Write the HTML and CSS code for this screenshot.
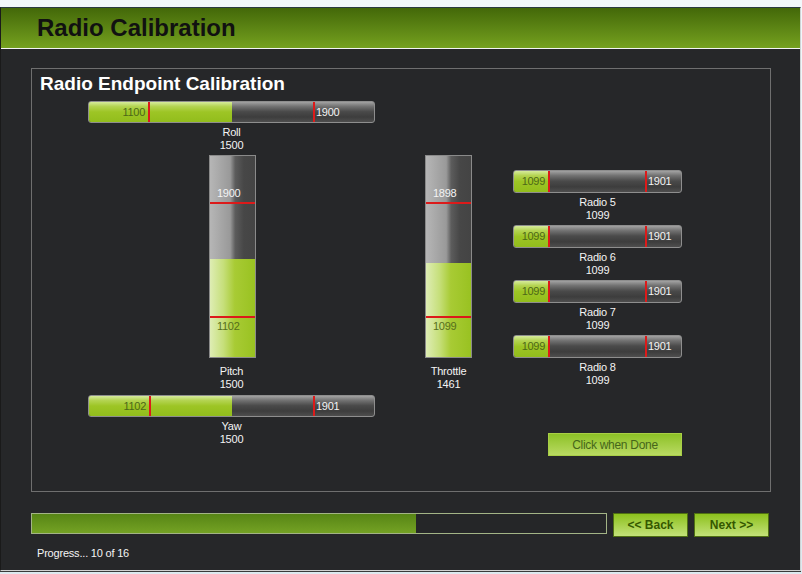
FILE: index.html
```html
<!DOCTYPE html>
<html>
<head>
<meta charset="utf-8">
<title>Radio Calibration</title>
<link rel="stylesheet" href="styles.css">
</head>
<body>
<div class="window">
  <header class="hdr"><h1>Radio Calibration</h1></header>
  <main class="main">
    <section class="frame">
      <h2>Radio Endpoint Calibration</h2>
      <div class="gauges">
        <div class="col-left">
          <div class="hbar wide">
            <div class="fill" style="width:143px"></div>
            <div class="mark min" style="left:59px"><span>1100</span></div>
            <div class="mark max" style="left:224px"><span>1900</span></div>
          </div>
          <div class="cap">Roll<br>1500</div>
          <div class="vbar pitch">
            <div class="vfill" style="height:98px"></div>
            <div class="vmark hi" style="top:46px"><span>1900</span></div>
            <div class="vmark lo" style="top:160px"><span>1102</span></div>
          </div>
          <div class="cap vcap">Pitch<br>1500</div>
          <div class="hbar wide yaw">
            <div class="fill" style="width:143px"></div>
            <div class="mark min" style="left:60px"><span>1102</span></div>
            <div class="mark max" style="left:224px"><span>1901</span></div>
          </div>
          <div class="cap">Yaw<br>1500</div>
        </div>

        <div class="col-mid">
          <div class="vbar">
            <div class="vfill" style="height:94px"></div>
            <div class="vmark hi" style="top:46px"><span>1898</span></div>
            <div class="vmark lo" style="top:160px"><span>1099</span></div>
          </div>
          <div class="cap vcap">Throttle<br>1461</div>
        </div>

        <div class="col-right">
          <div class="radio">
            <div class="hbar small">
              <div class="fill" style="width:35px"></div>
              <div class="mark min" style="left:34px"><span>1099</span></div>
              <div class="mark max" style="left:131px"><span>1901</span></div>
            </div>
            <div class="cap">Radio 5<br>1099</div>
          </div>
          <div class="radio">
            <div class="hbar small">
              <div class="fill" style="width:35px"></div>
              <div class="mark min" style="left:34px"><span>1099</span></div>
              <div class="mark max" style="left:131px"><span>1901</span></div>
            </div>
            <div class="cap">Radio 6<br>1099</div>
          </div>
          <div class="radio">
            <div class="hbar small">
              <div class="fill" style="width:35px"></div>
              <div class="mark min" style="left:34px"><span>1099</span></div>
              <div class="mark max" style="left:131px"><span>1901</span></div>
            </div>
            <div class="cap">Radio 7<br>1099</div>
          </div>
          <div class="radio">
            <div class="hbar small">
              <div class="fill" style="width:35px"></div>
              <div class="mark min" style="left:34px"><span>1099</span></div>
              <div class="mark max" style="left:131px"><span>1901</span></div>
            </div>
            <div class="cap">Radio 8<br>1099</div>
          </div>
          <button class="done">Click when Done</button>
        </div>
      </div>
    </section>

    <div class="progress-row">
      <div class="progress"><div class="pfill" style="width:384px"></div></div>
      <button class="nav">&lt;&lt; Back</button>
      <button class="nav">Next &gt;&gt;</button>
    </div>
    <div class="status">Progress... 10 of 16</div>
  </main>
</div>
</body>
</html>
```

FILE: styles.css
```css
* { box-sizing: border-box; }
html, body {
  margin: 0;
  padding: 0;
}
body {
  width: 802px;
  height: 574px;
  overflow: hidden;
  background: linear-gradient(#f2f8fb, #dde9ef);
  font-family: "Liberation Sans", Arial, sans-serif;
  padding-top: 7px;
}
.window {
  width: 801px;
  height: 564px;
  border-top: 1px solid #2b3b42;
  border-left: 1px solid #1a1a1a;
  border-right: 1px solid #cfd4d6;
  border-bottom: 1px solid #d0d0d0;
  box-shadow: 0 1px 0 #3a3a3a;
  background: #262729;
  display: flex;
  flex-direction: column;
}
.hdr {
  height: 41px;
  border-bottom: 1px solid #f4f4f4;
  background: linear-gradient(#436809, #75a11f);
  padding-left: 36px;
}
.hdr h1 {
  margin: 0;
  font-size: 24px;
  line-height: 40px;
  font-weight: bold;
  color: #111;
}
.main {
  flex: 1;
  padding: 19px 0 0 30px;
  background: #262729;
}
.frame {
  width: 740px;
  height: 424px;
  border: 1px solid #6f6f6f;
  padding-top: 4px;
}
.frame h2 {
  margin: 0;
  padding-left: 8px;
  font-size: 19px;
  line-height: 22px;
  font-weight: bold;
  color: #fff;
}
.gauges {
  display: flex;
  align-items: flex-start;
  padding-left: 56px;
  margin-top: 6px;
}
.col-left {
  width: 287px;
  display: flex;
  flex-direction: column;
  align-items: center;
}
.col-mid {
  width: 47px;
  margin-left: 50px;
  padding-top: 54px;
  display: flex;
  flex-direction: column;
  align-items: center;
}
.col-right {
  width: 169px;
  margin-left: 41px;
  padding-top: 69px;
  display: flex;
  flex-direction: column;
}
.cap {
  margin-top: 3px;
  font-size: 11px;
  line-height: 13px;
  text-align: center;
  color: #f4f4f4;
  letter-spacing: -0.2px;
  white-space: nowrap;
}
.cap.vcap { margin-top: 7px; }

/* horizontal bars */
.hbar {
  position: relative;
  height: 22px;
  border: 1px solid #8e8e8e;
  border-radius: 3px;
  background: linear-gradient(#a2a2a2 0%, #727272 22%, #4a4a4a 48%, #3d3d3d 75%, #4e4e4e 100%);
}
.hbar.wide { align-self: stretch; }
.hbar.yaw { margin-top: 4px; }
.hbar.small { height: 23px; }
.fill {
  position: absolute;
  left: 0; top: 0; bottom: 0;
  border-radius: 2px 0 0 2px;
  background: linear-gradient(#d6eb9c 0%, #b4d452 22%, #9dc525 50%, #92bd1c 100%);
}
.mark {
  position: absolute;
  top: 0; bottom: 0;
  width: 2px;
  background: #dc1a1a;
}
.mark span {
  position: absolute;
  top: 0;
  font-size: 11px;
  line-height: 20px;
  letter-spacing: -0.3px;
  white-space: nowrap;
}
.hbar.small .mark span { line-height: 21px; }
.mark.min span { right: calc(100% + 3px); color: #4d6818; }
.mark.max span { left: calc(100% + 1px); color: #f4f4f4; }

/* vertical bars */
.vbar {
  position: relative;
  width: 47px;
  height: 203px;
  border: 1px solid #8a8a8a;
  background: linear-gradient(to right, #b6b6b6 0%, #999 45%, #5c5c5c 56%, #474747 75%, #444 100%);
}
.vbar.pitch {
  margin-top: 3px;
  align-self: flex-start;
  margin-left: 121px;
}
.vfill {
  position: absolute;
  left: 0; right: 0; bottom: 0;
  background: linear-gradient(to right, #deedb4 0%, #c6df7a 30%, #a8cb34 55%, #99c221 100%);
}
.vmark {
  position: absolute;
  left: 0; right: 0;
  height: 2px;
  background: #dc1a1a;
}
.vmark span {
  position: absolute;
  left: 7px;
  font-size: 11px;
  line-height: 13px;
  letter-spacing: -0.3px;
}
.vmark.hi span { bottom: calc(100% + 2px); color: #f4f4f4; }
.vmark.lo span { top: calc(100% + 2px); color: #566f1c; }

.radio + .radio { margin-top: 3px; }

.done {
  align-self: flex-end;
  margin-top: 46px;
  width: 134px;
  height: 23px;
  padding: 0;
  border: 1px solid #a9cf46;
  background: linear-gradient(#8dc127, #b9da62);
  font-family: "Liberation Sans", Arial, sans-serif;
  font-size: 12px;
  letter-spacing: -0.3px;
  color: #46661a;
}

/* footer */
.progress-row {
  display: flex;
  align-items: flex-start;
  gap: 6px;
  margin-top: 21px;
}
.progress {
  width: 576px;
  height: 21px;
  border: 1px solid #a3b486;
  background: #252628;
}
.pfill {
  height: 100%;
  background: linear-gradient(#578515, #74a224);
}
.nav {
  width: 75px;
  height: 24px;
  padding: 0;
  border: 1px solid #4f7012;
  background: linear-gradient(#8cc11d, #c3e279);
  font-family: "Liberation Sans", Arial, sans-serif;
  font-size: 12px;
  font-weight: bold;
  color: #355800;
}
.status {
  margin-top: 10px;
  padding-left: 6px;
  font-size: 11px;
  line-height: 13px;
  letter-spacing: -0.2px;
  color: #f4f4f4;
}
```
